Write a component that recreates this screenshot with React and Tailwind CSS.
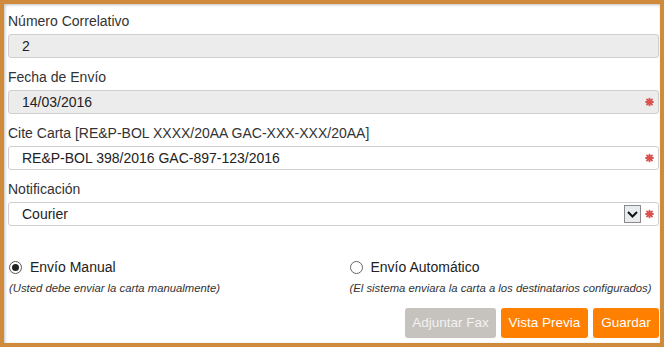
import React from 'react';

const Req = () => (
  <svg className="absolute right-[4px] top-1/2 -translate-y-1/2" width="9" height="9" viewBox="0 0 9 9">
    <g stroke="#d9534f" strokeWidth="1.8" strokeLinecap="round">
      <path d="M4.5 1v7M1 4.5h7M2 2l5 5M7 2l-5 5" />
    </g>
  </svg>
);

function Field({ label, value, disabled, required, select }) {
  return (
    <div className="mb-[11px]">
      <div className="text-[14px] leading-[17px] text-[#333] mb-[4px]">{label}</div>
      <div
        className={`relative h-[24px] rounded-[3px] border border-[#cfcfcf] flex items-center pl-[13px] text-[14px] text-[#222] ${disabled ? 'bg-[#ececec]' : 'bg-white'}`}
      >
        {value}
        {select && (
          <span className="absolute right-[17px] top-[2px] w-[17px] h-[18px] border border-[#8a8a8a] bg-[#e8ecef] flex items-center justify-center">
            <svg width="11" height="7" viewBox="0 0 11 7">
              <path d="M1 1l4.5 4.5L10 1" fill="none" stroke="#111" strokeWidth="2" />
            </svg>
          </span>
        )}
        {required && <Req />}
      </div>
    </div>
  );
}

export default function App() {
  return (
    <div className="w-[667px] h-[350px] bg-white font-['Liberation_Sans',Arial,sans-serif]">
      <div className="w-[664px] h-[347px] border-[4px] border-[#d08a3c] bg-white shadow-[inset_1px_1px_3px_rgba(0,0,0,0.25)] pl-[4px] pr-[1px] pt-[9px] flex flex-col">
        <Field label="Número Correlativo" value="2" disabled />
        <Field label="Fecha de Envío" value="14/03/2016" disabled required />
        <Field label="Cite Carta [RE&P-BOL XXXX/20AA GAC-XXX-XXX/20AA]" value="RE&P-BOL 398/2016 GAC-897-123/2016" required />
        <Field label="Notificación" value="Courier" required select />

        <div className="grid grid-cols-2 mt-[20px] px-[1px]">
          <div>
            <div className="flex items-center gap-[8px] text-[14px] text-[#222]">
              <span className="w-[13px] h-[13px] rounded-full border border-[#555] flex items-center justify-center">
                <span className="w-[7px] h-[7px] rounded-full bg-[#222]" />
              </span>
              Envío Manual
            </div>
            <div className="mt-[2px] text-[11.3px] italic text-[#333]">(Usted debe enviar la carta manualmente)</div>
          </div>
          <div className="pl-[16px]">
            <div className="flex items-center gap-[8px] text-[14px] text-[#222]">
              <span className="w-[13px] h-[13px] rounded-full border border-[#666]" />
              Envío Automático
            </div>
            <div className="mt-[2px] text-[11.3px] italic text-[#333]">(El sistema enviara la carta a los destinatarios configurados)</div>
          </div>
        </div>

        <div className="flex justify-end gap-[5px] mt-[11px]">
          <button className="h-[30px] w-[91px] rounded-[3px] bg-[#c6c2be] text-[#f2f2f2] text-[13.5px]">Adjuntar Fax</button>
          <button className="h-[30px] w-[87px] rounded-[3px] bg-[#ff8000] text-white text-[13.5px]">Vista Previa</button>
          <button className="h-[30px] w-[66px] rounded-[3px] bg-[#ff8000] text-white text-[13.5px]">Guardar</button>
        </div>
      </div>
    </div>
  );
}
